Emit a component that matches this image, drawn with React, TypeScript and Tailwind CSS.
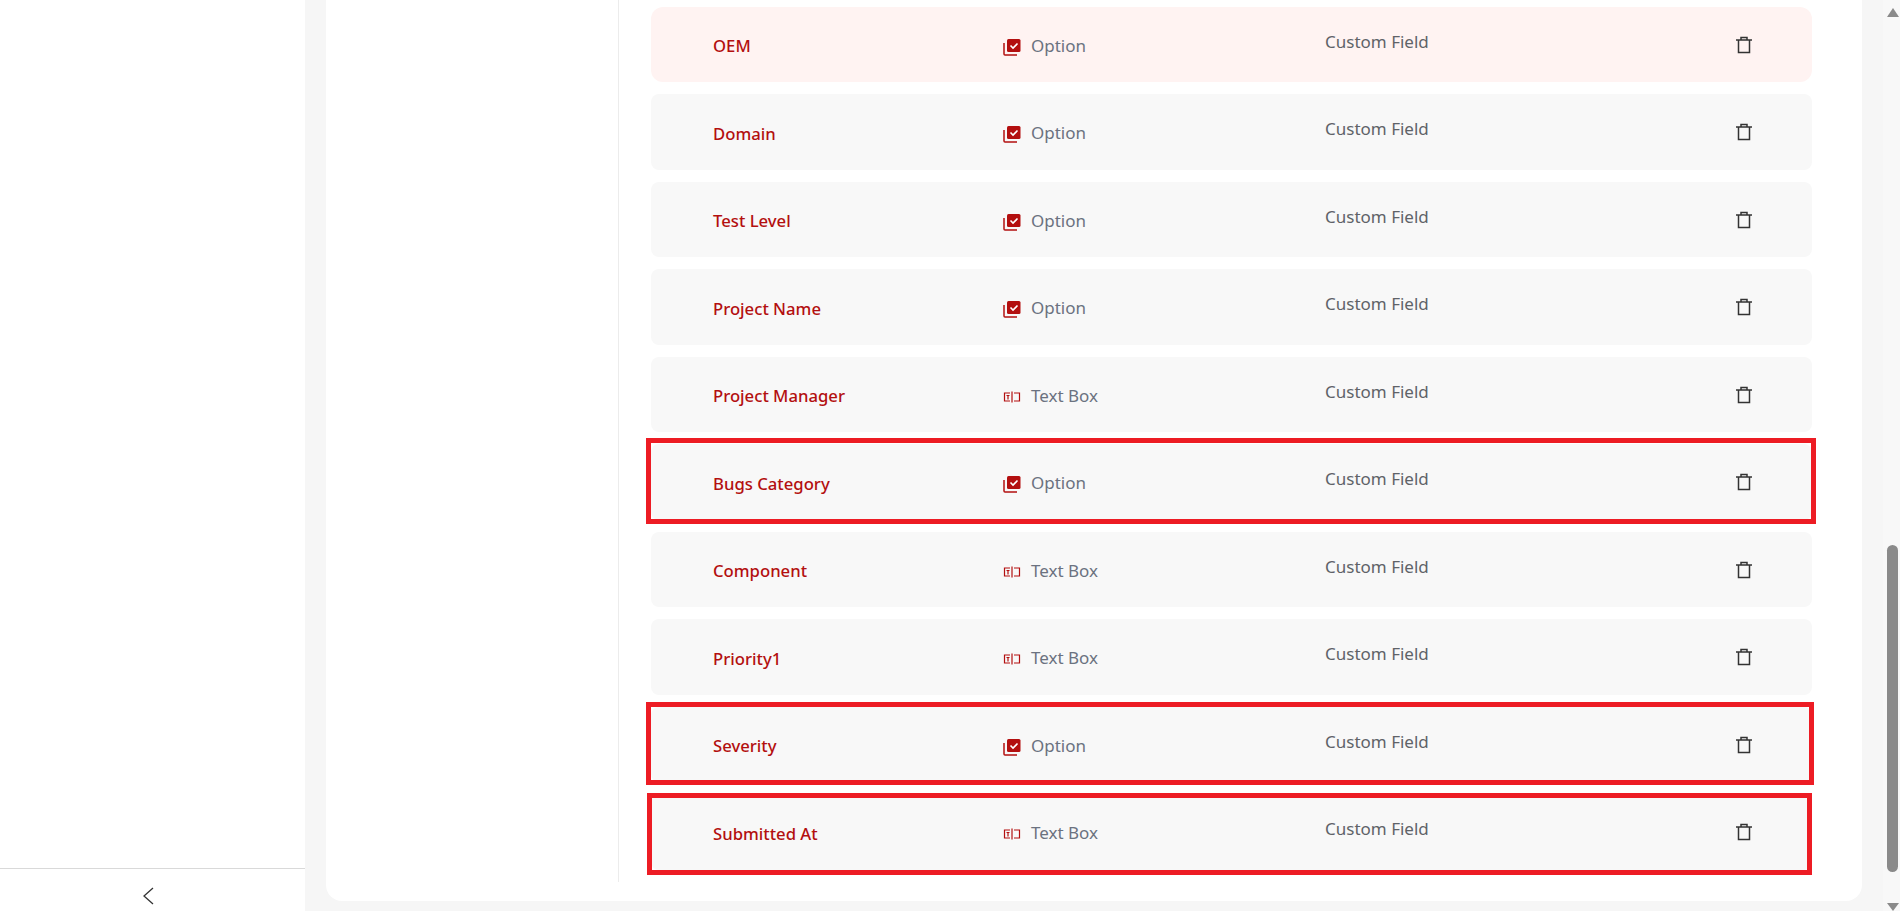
type Field = { name: string; type: "Option" | "Text Box" };

const fields: Field[] = [
  { name: "OEM", type: "Option" },
  { name: "Domain", type: "Option" },
  { name: "Test Level", type: "Option" },
  { name: "Project Name", type: "Option" },
  { name: "Project Manager", type: "Text Box" },
  { name: "Bugs Category", type: "Option" },
  { name: "Component", type: "Text Box" },
  { name: "Priority1", type: "Text Box" },
  { name: "Severity", type: "Option" },
  { name: "Submitted At", type: "Text Box" },
];

const OptionIcon = () => (
  <svg width="18" height="18" viewBox="0 0 18 18" className="mt-[2px] shrink-0">
    <path d="M1 5v11a1 1 0 0 0 1 1h12" fill="none" stroke="#b30f0f" strokeWidth="1.5" />
    <rect x="4" y="1" width="13.5" height="13" rx="1.5" fill="#b30f0f" />
    <path d="M7.500 7.500l2.500 2.500 4.500-4.500" fill="none" stroke="#fff" strokeWidth="1.6" />
  </svg>
);

const TextBoxIcon = () => (
  <svg width="18" height="12" viewBox="0 0 18 12" className="mt-[2px] shrink-0" fill="none" stroke="#b30f0f" strokeWidth="1.2">
    <path d="M7 2H1.500v8H7M11 2h5.500v8H11" />
    <path d="M3.500 4.500h3M5 4.500v4" />
    <path d="M9 0.500v11" />
  </svg>
);

const FieldRow = ({ field, index }: { field: Field; index: number }) => (
  <div className={`flex h-[75.4px] items-center pl-[62px] pt-[2px] ${index === 0 ? "rounded-xl bg-[#fff3f2]" : "rounded-lg bg-[#f8f8f8]"}`}>
    <div className="w-[290px] text-[16.7px] font-medium text-[#b30f0f]">{field.name}</div>
    <div className="flex w-[322px] items-center gap-[10px] text-[17px] text-[#6b7280]">
      {field.type === "Option" ? <OptionIcon /> : <TextBoxIcon />}
      {field.type}
    </div>
    <div className="-mt-[8px] w-[409px] text-[17px] text-[#5f6368]">Custom Field</div>
    <svg width="20" height="20" viewBox="0 0 20 20" fill="none" stroke="#333" strokeWidth="1.5" className="-mt-[2px]">
      <path d="M2 5h16M4.500 5v12.500h11V5M7 5V2.500h6V5" />
    </svg>
  </div>
);

export default function App() {
  return (
    <div className="flex h-[911px] w-[1900px] overflow-hidden bg-[#f6f6f6] font-['Noto_Sans',sans-serif]">
      <aside className="flex w-[305px] shrink-0 flex-col bg-white">
        <div className="flex-1 border-b border-[#d9d9d9]" />
        <div className="flex h-[42px] justify-center pr-[9px] pt-[18px]">
          <svg width="12" height="18" viewBox="0 0 12 18" fill="none" stroke="#333" strokeWidth="1.3">
            <path d="M11 1 2 9l9 8" />
          </svg>
        </div>
      </aside>
      <main className="ml-[21px] flex h-[901px] w-[1536px] rounded-b-2xl bg-white">
        <div className="w-[292px] shrink-0" />
        <div className="relative flex h-[882px] flex-1 flex-col gap-[12.1px] border-l border-[#ececec] pl-[32px] pr-[50px] pt-[7px]">
          {fields.map((f, i) => <FieldRow key={f.name} field={f} index={i} />)}
          <div className="absolute left-[27px] top-[438px] h-[86px] w-[1170px] border-[5px] border-[#ed1c24]" />
          <div className="absolute left-[27px] top-[702px] h-[83px] w-[1168px] border-[5px] border-[#ed1c24]" />
          <div className="absolute left-[28px] top-[793px] h-[82px] w-[1165px] border-[5px] border-[#ed1c24]" />
        </div>
      </main>
      <div className="ml-auto flex w-[17px] shrink-0 flex-col items-center bg-[#f8f8f8] pl-[2px]">
        <div className="mt-[8px] h-0 w-0 border-x-[6px] border-b-[9px] border-x-transparent border-b-[#8a8a8a]" />
        <div className="mt-[528px] h-[327px] w-[11px] rounded-full bg-[#8a8a8a]" />
        <div className="mt-[31px] h-0 w-0 border-x-[6px] border-t-[8px] border-x-transparent border-t-[#8a8a8a]" />
      </div>
    </div>
  );
}
